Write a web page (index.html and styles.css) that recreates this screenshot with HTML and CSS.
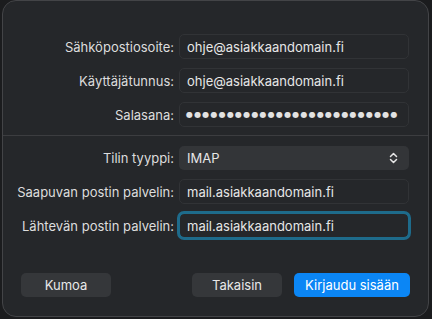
FILE: index.html
```html
<!DOCTYPE html>
<html lang="fi">
<head>
<meta charset="utf-8">
<link rel="stylesheet" href="styles.css">
</head>
<body>
<div class="dialog">
  <div class="form top">
    <label class="lbl">Sähköpostiosoite:</label>
    <div class="field">ohje@asiakkaandomain.fi</div>
    <label class="lbl">Käyttäjätunnus:</label>
    <div class="field">ohje@asiakkaandomain.fi</div>
    <label class="lbl">Salasana:</label>
    <div class="field dots">●●●●●●●●●●●●●●●●●●●●●●●●●●</div>
  </div>
  <div class="sep"></div>
  <div class="form bottom">
    <label class="lbl">Tilin tyyppi:</label>
    <div class="select"><span>IMAP</span>
      <svg class="chev" width="9" height="12" viewBox="0 0 9 12"><path d="M1.5 4.5 L4.5 1.5 L7.5 4.5 M1.5 7.5 L4.5 10.5 L7.5 7.5" fill="none" stroke="#e6e6e6" stroke-width="1.5" stroke-linecap="round" stroke-linejoin="round"/></svg>
    </div>
    <label class="lbl">Saapuvan postin palvelin:</label>
    <div class="field">mail.asiakkaandomain.fi</div>
    <label class="lbl">Lähtevän postin palvelin:</label>
    <div class="field focus">mail.asiakkaandomain.fi</div>
  </div>
  <div class="buttons">
    <button class="btn cancel">Kumoa</button>
    <div class="spacer"></div>
    <button class="btn back">Takaisin</button>
    <button class="btn primary">Kirjaudu sisään</button>
  </div>
</div>
</body>
</html>
```
FILE: styles.css
```css
html, body {
  margin: 0;
  padding: 0;
  background: #1b1c1e;
  width: 432px;
  height: 319px;
  overflow: hidden;
}
body {
  font-family: Inter, "Noto Sans", sans-serif;
  font-size: 13px;
  color: #dedede;
}
.dialog {
  box-sizing: border-box;
  margin-left: 2px;
  width: 427px;
  height: 317px;
  background: #25272a;
  border: 1px solid #434447;
  border-radius: 14px;
  display: flex;
  flex-direction: column;
}
.form {
  display: grid;
  grid-template-columns: 171px 230px;
  column-gap: 5px;
  align-items: center;
}
.top {
  padding-top: 33px;
  padding-bottom: 8px;
  row-gap: 9px;
}
.sep {
  height: 1px;
  background: #3c3d40;
}
.bottom {
  padding-top: 10px;
  grid-template-rows: 24px 25px 25px;
  row-gap: 9px;
}
.lbl {
  text-align: right;
  color: #dddddd;
  white-space: nowrap;
}
.field {
  box-sizing: border-box;
  height: 25px;
  border: 1px solid #313336;
  border-radius: 5px;
  background: #25272a;
  padding-left: 7px;
  display: flex;
  align-items: center;
  color: #e6e6e6;
  white-space: nowrap;
  overflow: hidden;
}
.dots {
  font-family: "DejaVu Sans", sans-serif;
  font-size: 8px;
  letter-spacing: 1.2px;
  padding-left: 6px;
  color: #e2e2e2;
}
.focus {
  outline: 3px solid #1e6b8b;
  outline-offset: -1px;
  border-color: #1e6b8b;
}
.select {
  box-sizing: border-box;
  height: 24px;
  border-radius: 5px;
  background: #333538;
  padding: 0 11px 0 8px;
  display: flex;
  align-items: center;
  justify-content: space-between;
  color: #e6e6e6;
}
.buttons {
  display: flex;
  margin-top: auto;
  padding: 0 18px 19px 18px;
  gap: 12px;
}
.spacer { flex: 1; }
.btn {
  font-family: inherit;
  font-size: 13px;
  height: 24px;
  border: none;
  border-radius: 5px;
  background: #35373a;
  color: #e8e8e8;
  padding: 0;
}
.cancel, .back { width: 90px; }
.primary {
  width: 116px;
  background: #0b86f5;
  color: #ffffff;
}
```
